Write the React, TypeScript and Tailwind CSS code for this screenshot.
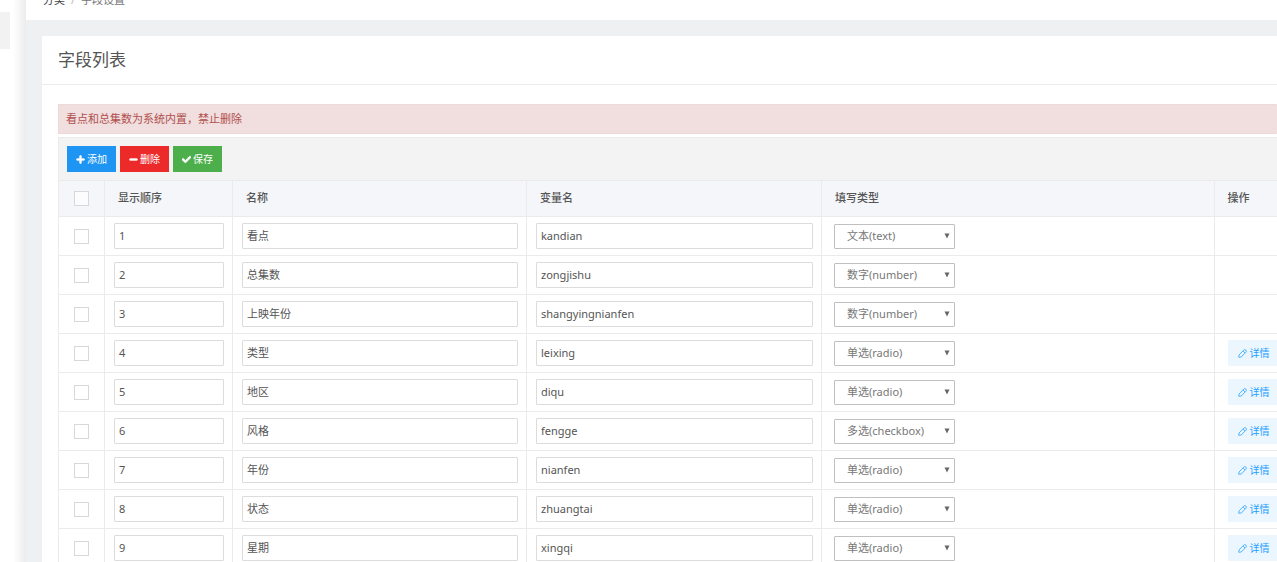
import { useState } from "react";
import { FaCheck, FaMinus, FaPlus } from "react-icons/fa";
import clsx from "clsx";

type FieldType = "text" | "number" | "radio" | "checkbox";

interface Field {
  order: number;
  name: string;
  variable: string;
  type: FieldType;
  builtin?: boolean;
}

const TYPE_OPTIONS: { value: FieldType; label: string }[] = [
  { value: "text", label: "文本(text)" },
  { value: "number", label: "数字(number)" },
  { value: "radio", label: "单选(radio)" },
  { value: "checkbox", label: "多选(checkbox)" },
];

const FIELDS: Field[] = [
  { order: 1, name: "看点", variable: "kandian", type: "text", builtin: true },
  { order: 2, name: "总集数", variable: "zongjishu", type: "number", builtin: true },
  { order: 3, name: "上映年份", variable: "shangyingnianfen", type: "number", builtin: true },
  { order: 4, name: "类型", variable: "leixing", type: "radio" },
  { order: 5, name: "地区", variable: "diqu", type: "radio" },
  { order: 6, name: "风格", variable: "fengge", type: "checkbox" },
  { order: 7, name: "年份", variable: "nianfen", type: "radio" },
  { order: 8, name: "状态", variable: "zhuangtai", type: "radio" },
  { order: 9, name: "星期", variable: "xingqi", type: "radio" },
];

function PencilIcon() {
  return (
    <svg viewBox="0 0 18 18" className="h-[9px] w-[9px] shrink-0" fill="none" stroke="currentColor" strokeWidth="1.5">
      <path
        d="M1.500 16.500L2 12 11.500 2.200a3 3 0 0 1 4.300 0 3 3 0 0 1 0 4.300L6.500 16z"
        strokeLinejoin="round"
      />
      <path d="M10 4l4 4" />
    </svg>
  );
}

function CheckBox({ label, checked, onChange }: { label: string; checked: boolean; onChange: () => void }) {
  return (
    <input
      type="checkbox"
      aria-label={label}
      checked={checked}
      onChange={onChange}
      className="mx-auto block h-[15px] w-[15px] appearance-none border border-[#d8d8d8] bg-white/70 checked:border-[#1e9fff] checked:bg-[#1e9fff]"
    />
  );
}

function TextInput({ label, value }: { label: string; value: string | number }) {
  return (
    <input
      type="text"
      aria-label={label}
      defaultValue={value}
      className="block h-[26px] w-full rounded-[1px] border border-[#dcdcdc] bg-white px-1 pb-[2px] text-[11px] text-[#555] outline-none focus:border-[#1e9fff]"
    />
  );
}

function TypeSelect({ label, value }: { label: string; value: FieldType }) {
  return (
    <div className="relative w-[121px]">
      <select
        aria-label={label}
        defaultValue={value}
        className="block h-[25px] w-full appearance-none rounded-[1px] border border-[#c0c0c0] bg-white pl-3 text-[11px] text-[#777] outline-none"
      >
        {TYPE_OPTIONS.map((o) => (
          <option key={o.value} value={o.value}>
            {o.label}
          </option>
        ))}
      </select>
      <svg viewBox="0 0 6 6" className="pointer-events-none absolute top-[9px] right-[5px] h-[6px] w-[6px] fill-[#666]">
        <path d="M.5.5h5L3 5.500z" />
      </svg>
    </div>
  );
}

const toolButton = "flex h-[26px] items-center gap-[2px] px-[9px] text-[10px] text-white";
const toolIcon = "h-[9px] w-[9px] stroke-current stroke-[40]";
const headCell = "border border-[#ebebeb] px-[13px] text-left font-medium";
const bodyCell = "border border-[#ebebeb] pr-2 pl-[9px]";

export default function App() {
  const [selected, setSelected] = useState<number[]>([]);
  const allSelected = selected.length === FIELDS.length;

  const toggle = (order: number) =>
    setSelected((prev) => (prev.includes(order) ? prev.filter((o) => o !== order) : [...prev, order]));

  return (
    <div className="flex h-screen overflow-hidden bg-[#eff0f2] font-['Noto_Sans','Noto_Sans_CJK_SC',sans-serif] text-[11px] text-[#555]">
      <aside className="w-[26px] shrink-0 bg-linear-to-r from-white from-50% to-[#ececec] pt-3">
        <div className="h-[37px] w-[10px] bg-[#f2f2f2]" />
      </aside>

      <div className="min-w-0 flex-1">
        <header className="flex h-5 items-start bg-white pl-[17px]">
          <nav className="-mt-2 flex gap-[6px] leading-4">
            <a href="#" className="text-[#444]">
              分类
            </a>
            <span className="text-[#bbb]">/</span>
            <span className="text-[#777]">字段设置</span>
          </nav>
        </header>

        <main className="mt-4 ml-4 bg-white">
          <h1 className="flex h-[49px] items-center border-b border-[#ebebeb] pl-4 text-[17px] text-[#555]">字段列表</h1>

          <div className="pt-[19px] pl-4">
            <p className="flex h-[30px] items-center rounded-[1px] border border-r-0 border-[#eed9d9] bg-[#f1dede] pl-[7px] text-[#b0504e]">
              看点和总集数为系统内置，禁止删除
            </p>

            <div className="mt-[3px] flex h-[43px] items-center gap-1 border-t border-l border-[#ebebeb] bg-[#f3f3f3] pl-2">
              <button type="button" className={clsx(toolButton, "bg-[#1e95f3]")}>
                <FaPlus className={toolIcon} />
                添加
              </button>
              <button type="button" className={clsx(toolButton, "bg-[#ec2a2a]")}>
                <FaMinus className={toolIcon} />
                删除
              </button>
              <button type="button" className={clsx(toolButton, "bg-[#4caf4c]")}>
                <FaCheck className={toolIcon} />
                保存
              </button>
            </div>

            <table className="w-full table-fixed">
              <colgroup>
                <col className="w-[46px]" />
                <col className="w-[128px]" />
                <col className="w-[294px]" />
                <col className="w-[295px]" />
                <col />
                <col className="w-[63px]" />
              </colgroup>
              <thead>
                <tr className="h-9 bg-[#f4f6fa]">
                  <th className="border border-[#ebebeb]">
                    <CheckBox
                      label="全选"
                      checked={allSelected}
                      onChange={() => setSelected(allSelected ? [] : FIELDS.map((f) => f.order))}
                    />
                  </th>
                  <th className={headCell}>显示顺序</th>
                  <th className={headCell}>名称</th>
                  <th className={headCell}>变量名</th>
                  <th className={headCell}>填写类型</th>
                  <th className="border border-r-0 border-[#ebebeb] pl-[13px] text-left font-medium">操作</th>
                </tr>
              </thead>
              <tbody>
                {FIELDS.map((f) => (
                  <tr key={f.order} className="h-[39px]">
                    <td className="border border-[#ebebeb]">
                      <CheckBox
                        label={`选择${f.name}`}
                        checked={selected.includes(f.order)}
                        onChange={() => toggle(f.order)}
                      />
                    </td>
                    <td className={bodyCell}>
                      <TextInput label="显示顺序" value={f.order} />
                    </td>
                    <td className={bodyCell}>
                      <TextInput label="名称" value={f.name} />
                    </td>
                    <td className={bodyCell}>
                      <TextInput label="变量名" value={f.variable} />
                    </td>
                    <td className="border border-[#ebebeb] pl-3">
                      <TypeSelect label="填写类型" value={f.type} />
                    </td>
                    <td className="border border-r-0 border-[#ebebeb] pl-[13px]">
                      {!f.builtin && (
                        <a
                          href="#"
                          className="inline-flex h-[26px] items-center gap-[3px] bg-[#ebf6ff] px-[10px] align-middle text-[10px] whitespace-nowrap text-[#1e9fff]"
                        >
                          <PencilIcon />
                          详情
                        </a>
                      )}
                    </td>
                  </tr>
                ))}
              </tbody>
            </table>
          </div>
        </main>
      </div>
    </div>
  );
}
